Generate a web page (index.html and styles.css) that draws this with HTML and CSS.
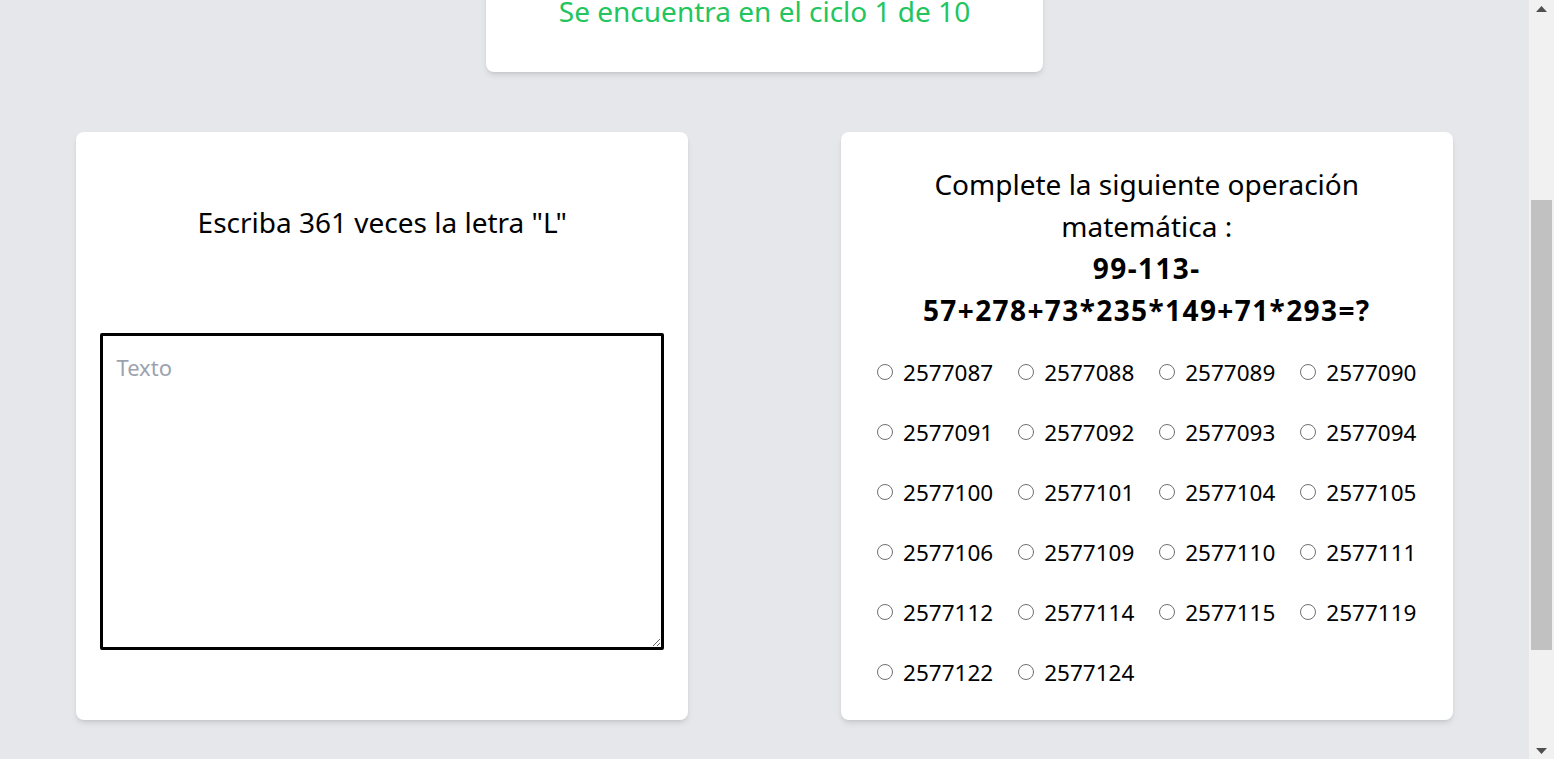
FILE: index.html
```html
<!DOCTYPE html>
<html lang="es">
<head>
<meta charset="utf-8">
<title>Ciclo 1 de 10</title>
<link rel="stylesheet" href="styles.css">
</head>
<body>
<div class="viewport">
<main class="page">
  <section class="top-card">
    <h1 class="top-title">Prueba de concentración</h1>
    <p class="top-text">Resuelva los ejercicios de cada ciclo.</p>
    <p class="status">Se encuentra en el ciclo 1 de 10</p>
  </section>

  <div class="row">
    <section class="card card-write">
      <p class="prompt">Escriba 361 veces la letra "L"</p>
      <textarea class="answer" placeholder="Texto"></textarea>
    </section>

    <section class="card card-math">
      <p class="question">Complete la siguiente operación matemática :<br><strong class="expr">99-113-57+278+73*235*149+71*293=?</strong></p>
      <div class="options">
        <label class="option"><input type="radio" name="op"><span>2577087</span></label>
        <label class="option"><input type="radio" name="op"><span>2577088</span></label>
        <label class="option"><input type="radio" name="op"><span>2577089</span></label>
        <label class="option"><input type="radio" name="op"><span>2577090</span></label>
        <label class="option"><input type="radio" name="op"><span>2577091</span></label>
        <label class="option"><input type="radio" name="op"><span>2577092</span></label>
        <label class="option"><input type="radio" name="op"><span>2577093</span></label>
        <label class="option"><input type="radio" name="op"><span>2577094</span></label>
        <label class="option"><input type="radio" name="op"><span>2577100</span></label>
        <label class="option"><input type="radio" name="op"><span>2577101</span></label>
        <label class="option"><input type="radio" name="op"><span>2577104</span></label>
        <label class="option"><input type="radio" name="op"><span>2577105</span></label>
        <label class="option"><input type="radio" name="op"><span>2577106</span></label>
        <label class="option"><input type="radio" name="op"><span>2577109</span></label>
        <label class="option"><input type="radio" name="op"><span>2577110</span></label>
        <label class="option"><input type="radio" name="op"><span>2577111</span></label>
        <label class="option"><input type="radio" name="op"><span>2577112</span></label>
        <label class="option"><input type="radio" name="op"><span>2577114</span></label>
        <label class="option"><input type="radio" name="op"><span>2577115</span></label>
        <label class="option"><input type="radio" name="op"><span>2577119</span></label>
        <label class="option"><input type="radio" name="op"><span>2577122</span></label>
        <label class="option"><input type="radio" name="op"><span>2577124</span></label>
      </div>
    </section>
  </div>
</main>
</div>
<div class="scrollbar" aria-hidden="true">
  <div class="sb-button">
    <svg width="11" height="6" viewBox="0 0 11 6"><path d="M0 6L5.5 0L11 6Z" fill="#505050"/></svg>
  </div>
  <div class="sb-track"><div class="sb-thumb"></div></div>
  <div class="sb-button">
    <svg width="11" height="6" viewBox="0 0 11 6"><path d="M0 0L5.5 6L11 0Z" fill="#505050"/></svg>
  </div>
</div>
<script src="script.js"></script>
</body>
</html>
```

FILE: styles.css
```css
html,
body {
  height: 100%;
  overflow: hidden;
}

body {
  margin: 0;
  display: flex;
  background: #e5e7eb;
  font-family: "Noto Sans", "Open Sans", sans-serif;
  color: #000;
}

.viewport {
  flex: 1;
  min-width: 0;
  height: 100vh;
  overflow-y: scroll;
  scroll-behavior: auto;
  scrollbar-width: none;
}

.viewport::-webkit-scrollbar {
  display: none;
}

.scrollbar {
  flex: 0 0 25px;
  height: 100vh;
  display: flex;
  flex-direction: column;
  background: #f1f1f1;
}

.sb-button {
  height: 17px;
  flex: 0 0 17px;
  display: flex;
  align-items: center;
  justify-content: center;
}

.sb-track {
  flex: 1;
  padding: 183px 2px 0;
}

.sb-thumb {
  height: 450px;
  background: #c1c1c1;
}

.page {
  padding: 153px 0 194px;
}

.top-card {
  width: 557px;
  margin: 0 auto;
  box-sizing: border-box;
  padding: 32px 24px 40px;
  background: #fff;
  border-radius: 8px;
  box-shadow: 0 4px 6px -1px rgba(0, 0, 0, 0.1), 0 2px 4px -2px rgba(0, 0, 0, 0.1);
  text-align: center;
}

.top-title {
  margin: 0 0 12px;
  font-size: 32px;
  line-height: 48px;
  font-weight: 700;
}

.top-text {
  margin: 0 0 24px;
  font-size: 20px;
  line-height: 30px;
}

.status {
  margin: 0;
  color: #22c55e;
  font-size: 28px;
  line-height: 42px;
}

.row {
  display: flex;
  justify-content: space-around;
  margin-top: 60px;
}

.card {
  width: 40%;
  box-sizing: border-box;
  padding: 31px 24px 32px;
  background: #fff;
  border-radius: 8px;
  box-shadow: 0 4px 6px -1px rgba(0, 0, 0, 0.1), 0 2px 4px -2px rgba(0, 0, 0, 0.1);
}

.prompt {
  margin: 38px 0 90px;
  font-size: 28px;
  line-height: 42px;
  text-align: center;
}

.answer {
  display: block;
  width: 100%;
  height: 317px;
  box-sizing: border-box;
  margin: 0;
  padding: 16px 13px 15px;
  border: 3px solid #000;
  border-radius: 2px;
  font-family: "Noto Sans", "Open Sans", sans-serif;
  font-size: 22px;
  line-height: 30px;
  color: #000;
  background: #fff;
  outline: none;
}

.answer::placeholder {
  color: #9ca3af;
}

.question {
  max-width: 520px;
  margin: 0 auto;
  font-size: 28px;
  line-height: 42px;
  text-align: center;
}

.expr {
  font-weight: 700;
  letter-spacing: 1.4px;
}

.options {
  display: grid;
  grid-template-columns: repeat(4, auto);
  justify-content: center;
  column-gap: 25px;
  row-gap: 30px;
  margin-top: 27px;
}

.option {
  display: flex;
  align-items: center;
  gap: 10px;
  font-size: 22.5px;
  line-height: 30px;
}

.option input {
  appearance: none;
  -webkit-appearance: none;
  flex: 0 0 16px;
  box-sizing: border-box;
  width: 16px;
  height: 16px;
  margin: 0 0 2px;
  border: 1.5px solid #707070;
  border-radius: 50%;
  background: #fff;
}
```

FILE: script.js
```js
var viewport = document.querySelector('.viewport');
var row = document.querySelector('.row');
viewport.scrollTop = row.getBoundingClientRect().top - viewport.getBoundingClientRect().top + viewport.scrollTop - 132;
```
